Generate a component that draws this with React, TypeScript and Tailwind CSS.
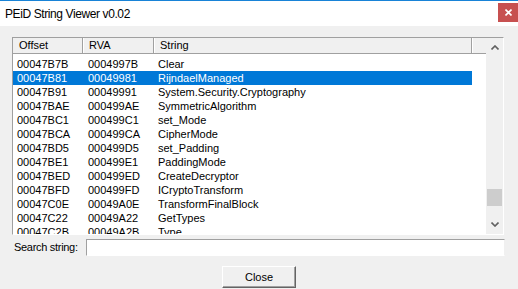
import { useState } from 'react'

const strings = [
  { offset: '00047B7B', rva: '0004997B', text: 'Clear' },
  { offset: '00047B81', rva: '00049981', text: 'RijndaelManaged' },
  { offset: '00047B91', rva: '00049991', text: 'System.Security.Cryptography' },
  { offset: '00047BAE', rva: '000499AE', text: 'SymmetricAlgorithm' },
  { offset: '00047BC1', rva: '000499C1', text: 'set_Mode' },
  { offset: '00047BCA', rva: '000499CA', text: 'CipherMode' },
  { offset: '00047BD5', rva: '000499D5', text: 'set_Padding' },
  { offset: '00047BE1', rva: '000499E1', text: 'PaddingMode' },
  { offset: '00047BED', rva: '000499ED', text: 'CreateDecryptor' },
  { offset: '00047BFD', rva: '000499FD', text: 'ICryptoTransform' },
  { offset: '00047C0E', rva: '00049A0E', text: 'TransformFinalBlock' },
  { offset: '00047C22', rva: '00049A22', text: 'GetTypes' },
  { offset: '00047C2B', rva: '00049A2B', text: 'Type' },
]

function Chevron({ down }: { down?: boolean }) {
  return (
    <svg width="8" height="5" viewBox="0 0 8 5" className={down ? 'rotate-180' : ''}>
      <path d="M0.5 4.5 L4 1 L7.5 4.5" stroke="#606060" strokeWidth="1.6" fill="none" />
    </svg>
  )
}

export default function App() {
  const [selected, setSelected] = useState(1)
  const [search, setSearch] = useState('')

  return (
    <div className="w-[518px] h-[289px] flex flex-col bg-[#f0f0f0] border-t border-[#1883d7] font-['Liberation_Sans',Arial,sans-serif] text-[11px] text-black overflow-hidden">
      {/* Title bar */}
      <div className="h-[25px] bg-white flex justify-between">
        <div className="pl-[5px] pt-[4px] text-[12px] tracking-[-0.4px]">PEiD String Viewer v0.02</div>
        <div className="mt-[2px] w-[20px] h-[19px] bg-[#c75050] flex items-center justify-center">
          <svg width="7" height="7" viewBox="0 0 7 7">
            <path d="M0.5 0.5 L6.5 6.5 M6.5 0.5 L0.5 6.5" stroke="white" strokeWidth="1.6" />
          </svg>
        </div>
      </div>

      {/* Body */}
      <div className="flex-1 flex flex-col px-[12px] pt-[11px]">
        {/* List view */}
        <div className="h-[198px] w-[492px] flex bg-white border-t border-l border-[#a0a0a0] border-r-white border-b-white border-r border-b">
          <div className="w-[473px] overflow-hidden">
            <div className="h-[16px] flex bg-[#f0f0f0] border-b border-[#a0a0a0] leading-[15px]">
              <div className="w-[70px] pl-[6px] border-r border-[#a0a0a0]">Offset</div>
              <div className="w-[71px] pl-[5px] border-r border-[#a0a0a0] border-l border-l-white">RVA</div>
              <div className="w-[318px] pl-[5px] border-r border-[#a0a0a0] border-l border-l-white">String</div>
              <div className="flex-1 border-l border-l-white" />
            </div>
            <div className="pt-[3px]">
              {strings.map((row, i) => (
                <div
                  key={row.offset}
                  onClick={() => setSelected(i)}
                  className={`w-[459px] h-[14px] leading-[14px] flex ${i === selected ? 'bg-[#0078d7] text-white' : ''}`}
                >
                  <div className="w-[70px] pl-[4px]">{row.offset}</div>
                  <div className="w-[71px] pl-[5px]">{row.rva}</div>
                  <div className="w-[318px] pl-[4px]">{row.text}</div>
                </div>
              ))}
            </div>
          </div>
          {/* Scrollbar */}
          <div className="w-[17px] bg-[#f0f0f0] flex flex-col items-center">
            <div className="h-[17px] flex items-center justify-center pt-[1px]">
              <Chevron />
            </div>
            <div className="flex-1 w-full flex flex-col justify-end pb-[11px]">
              <div className="h-[17px] ml-[1px] w-[15px] bg-[#cdcdcd]" />
            </div>
            <div className="h-[17px] flex items-center justify-center pb-[3px]">
              <Chevron down />
            </div>
          </div>
        </div>

        {/* Search row */}
        <div className="mt-[4px] flex items-center">
          <div className="w-[74px] pl-[2px] tracking-[-0.3px]">Search string:</div>
          <input
            value={search}
            onChange={(e) => setSearch(e.target.value)}
            className="w-[419px] h-[17px] bg-white border-t border-l border-[#a0a0a0] border-r border-b border-r-[#f0f0f0] border-b-white outline-none px-[2px]"
          />
        </div>

        {/* Close button */}
        <div className="mt-[10px] flex justify-center">
          <button className="w-[74px] h-[22px] bg-[#f0f0f0] border border-t-white border-l-white border-r-[#646464] border-b-[#646464] shadow-[inset_-1px_-1px_0_#a0a0a0] text-[11px]">
            Close
          </button>
        </div>
      </div>
    </div>
  )
}
